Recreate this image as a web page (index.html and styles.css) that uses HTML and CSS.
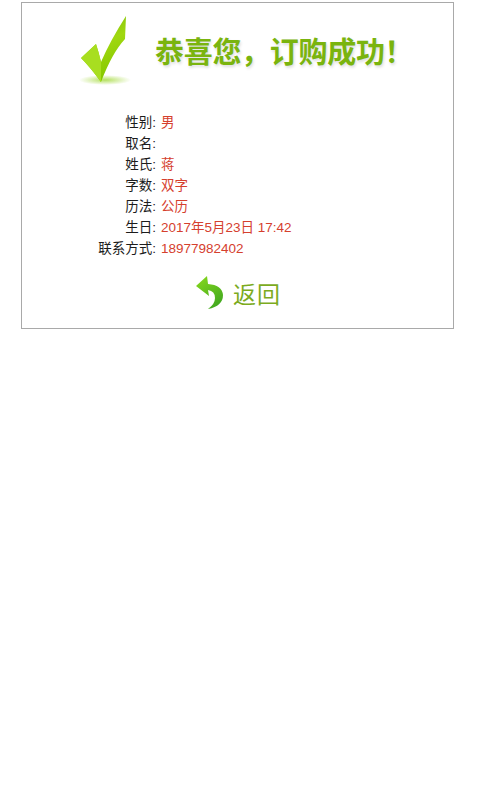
FILE: index.html
```html
<!DOCTYPE html>
<html>
    <head>
        <meta charset="utf-8" />
        <title>订购成功</title>
        <link rel="stylesheet" href="styles.css">
    </head>

    <body>
        <div class="card">
            <!-- 顶部 -->
            <div class="banner">
                <svg class="check" width="56" height="78" viewBox="0 0 56 78">
                    <defs>
                        <linearGradient id="checkFill" x1="0" y1="0" x2="0.3" y2="1">
                            <stop offset="0" stop-color="#78bc06" />
                            <stop offset="0.5" stop-color="#a0d810" />
                            <stop offset="1" stop-color="#86c800" />
                        </linearGradient>
                        <radialGradient id="checkShadow">
                            <stop offset="0" stop-color="#b4e060" />
                            <stop offset="1" stop-color="#ffffff" />
                        </radialGradient>
                    </defs>
                    <ellipse cx="25" cy="65" rx="26" ry="5" fill="url(#checkShadow)" />
                    <path d="M1 43 L16 29 Q19 38 21 47 Q30 26 46 1 L45 24 Q32 38 21 67 Q10 52 1 43 Z" fill="url(#checkFill)" />
                    <path d="M1 43 L16 29 Q19 38 21 47 L21 67 Q10 52 1 43 Z" fill="#a8de20" />
                </svg>
                <h1 class="title">恭喜您，订购成功！</h1>
            </div>

            <!-- 订单信息 -->
            <div class="info">
                <div class="row"><span class="label">性别:</span><span class="value">男</span></div>
                <div class="row"><span class="label">取名:</span><span class="value"></span></div>
                <div class="row"><span class="label">姓氏:</span><span class="value">蒋</span></div>
                <div class="row"><span class="label">字数:</span><span class="value">双字</span></div>
                <div class="row"><span class="label">历法:</span><span class="value">公历</span></div>
                <div class="row"><span class="label">生日:</span><span class="value">2017年5月23日 17:42</span></div>
                <div class="row"><span class="label">联系方式:</span><span class="value">18977982402</span></div>
            </div>

            <!-- 返回 -->
            <div class="back">
                <svg class="back-icon" width="27" height="36" viewBox="0 0 27 36">
                    <defs>
                        <linearGradient id="backFill" x1="0" y1="0" x2="0.6" y2="1">
                            <stop offset="0" stop-color="#8ada1c" />
                            <stop offset="1" stop-color="#44aa20" />
                        </linearGradient>
                    </defs>
                    <path d="M11 1 L0 11 L13 21 L12 15 Q19 16 19 23 Q19 29 12 34 Q27 31 27 20 Q26 10 12 9 Z" fill="url(#backFill)" />
                </svg>
                <span class="back-text">返回</span>
            </div>
        </div>
    </body>
</html>
```

FILE: styles.css
```css
html,
body {
    margin: 0;
    padding: 0;
    background: #fff;
}

body {
    height: 800px;
    overflow: hidden;
    font-family: "Liberation Sans", "Noto Sans CJK SC", sans-serif;
}

.card {
    width: 431px;
    height: 325px;
    margin: 2px 0 0 21px;
    border: 1px solid #a9a9a9;
}

.banner {
    display: flex;
    align-items: flex-start;
    height: 109px;
    padding: 12px 0 0 58px;
    box-sizing: border-box;
}

.title {
    margin: 21px 0 0 19px;
    font-size: 29px;
    line-height: 34px;
    letter-spacing: -0.3px;
    font-weight: bold;
    white-space: nowrap;
    color: #7ab40e;
    text-shadow: 1px 2px 3px #ddd;
}

.info {
    font-size: 13.5px;
    line-height: 21px;
}

.row {
    display: flex;
    height: 21px;
}

.label {
    width: 134px;
    text-align: right;
    color: #1c1c1c;
}

.value {
    margin-left: 5px;
    color: #d5402e;
}

.back {
    display: flex;
    align-items: center;
    margin: 16px 0 0 174px;
}

.back-text {
    margin-left: 10px;
    font-size: 23px;
    letter-spacing: 1px;
    color: #7cab1e;
}
```
